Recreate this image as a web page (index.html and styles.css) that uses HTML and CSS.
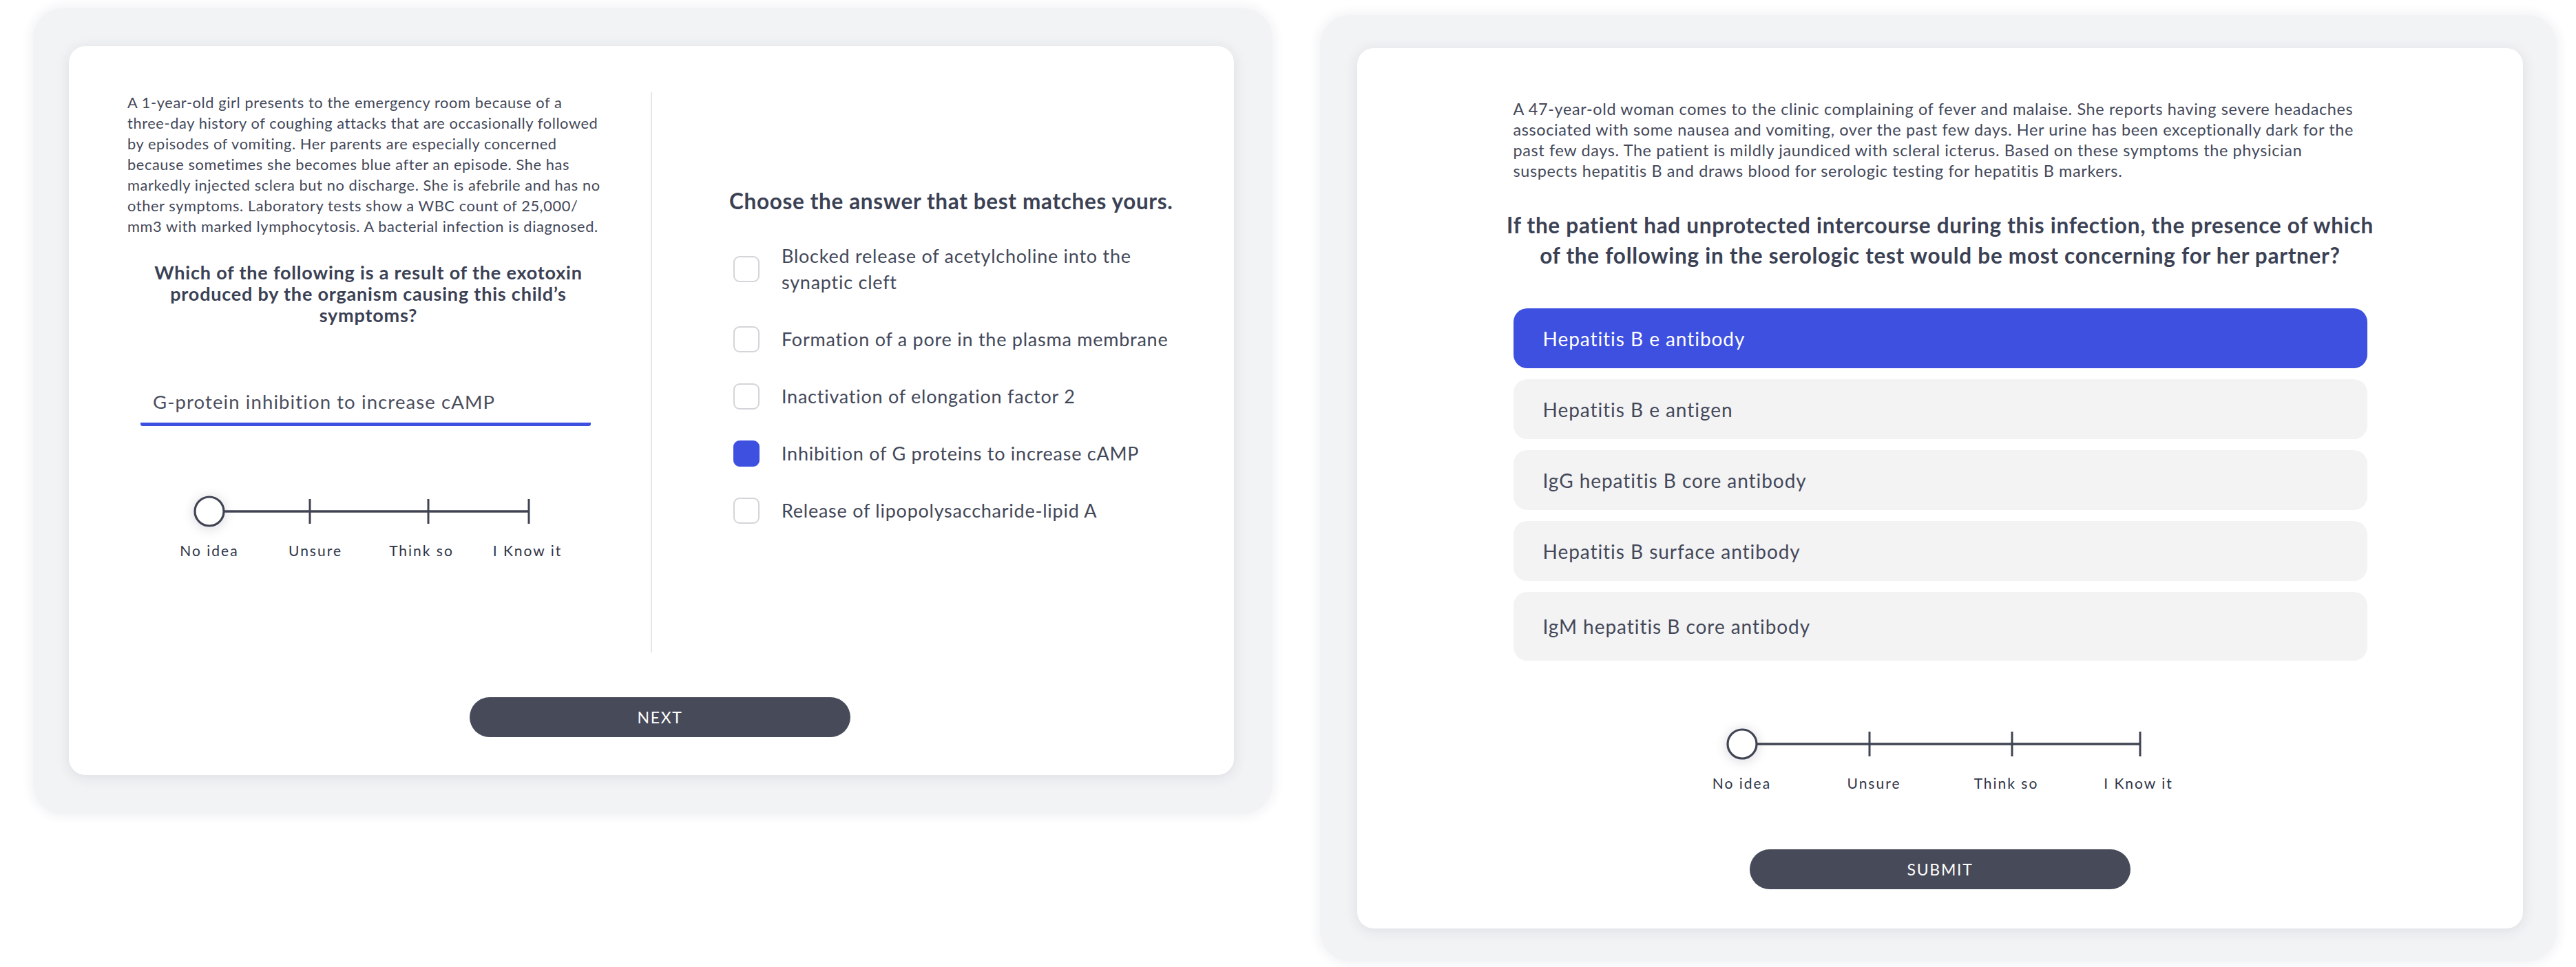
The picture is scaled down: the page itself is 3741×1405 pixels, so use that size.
FILE: index.html
```html
<!DOCTYPE html>
<html lang="en">
<head>
<meta charset="utf-8">
<title>Question cards</title>
<link rel="stylesheet" href="styles.css">
</head>
<body>
<div class="stage">

  <section class="panel panel-left">
    <div class="card card-left">
      <div class="split">
        <div class="col-case">
          <p class="passage">A 1-year-old girl presents to the emergency room because of a three&#8209;day history of coughing attacks that are occasionally followed by episodes of vomiting. Her parents are especially concerned because sometimes she becomes blue after an episode. She has markedly injected sclera but no discharge. She is afebrile and has no other symptoms. Laboratory tests show a WBC count of 25,000/ mm3 with marked lymphocytosis. A bacterial infection is diagnosed.</p>
          <p class="question q-left">Which of the following is a result of the exotoxin produced by the organism causing this child’s symptoms?</p>
          <div class="answer-field">G-protein inhibition to increase cAMP</div>
          <div class="confidence conf-left">
            <svg class="track" width="616" height="46" viewBox="0 0 616 46">
              <defs><filter id="glowL" x="-1" y="-1" width="3" height="3"><feGaussianBlur stdDeviation="7"/></filter></defs>
              <circle cx="77" cy="25" r="26" fill="rgba(30,34,50,0.10)" filter="url(#glowL)"/>
              <line x1="98" y1="23" x2="541" y2="23" stroke="#404452" stroke-width="3.5"/>
              <line x1="223" y1="5" x2="223" y2="41" stroke="#404452" stroke-width="3"/>
              <line x1="395" y1="5" x2="395" y2="41" stroke="#404452" stroke-width="3"/>
              <line x1="541" y1="5" x2="541" y2="41" stroke="#404452" stroke-width="3"/>
              <circle cx="77" cy="23" r="21" fill="#fff" stroke="#404452" stroke-width="3.2"/>
            </svg>
            <div class="conf-labels"><span>No idea</span><span>Unsure</span><span>Think so</span><span>I Know it</span></div>
          </div>
        </div>
        <div class="divider"></div>
        <div class="col-choices">
          <h2 class="choose">Choose the answer that best matches yours.</h2>
          <ul class="checklist">
            <li><span class="box"></span><span class="opt">Blocked release of acetylcholine into the synaptic cleft</span></li>
            <li><span class="box"></span><span class="opt">Formation of a pore in the plasma membrane</span></li>
            <li><span class="box"></span><span class="opt">Inactivation of elongation factor 2</span></li>
            <li><span class="box is-checked"></span><span class="opt">Inhibition of G proteins to increase cAMP</span></li>
            <li><span class="box"></span><span class="opt">Release of lipopolysaccharide-lipid A</span></li>
          </ul>
        </div>
      </div>
      <div class="actions actions-left"><button class="pill">NEXT</button></div>
    </div>
  </section>

  <section class="panel panel-right">
    <div class="card card-right">
      <div class="stack">
        <p class="passage passage-right">A 47-year-old woman comes to the clinic complaining of fever and malaise. She reports having severe headaches associated with some nausea and vomiting, over the past few days. Her urine has been exceptionally dark for the past few days. The patient is mildly jaundiced with scleral icterus. Based on these symptoms the physician suspects hepatitis B and draws blood for serologic testing for hepatitis B markers.</p>
        <p class="question q-right">If the patient had unprotected intercourse during this infection, the presence of which of the following in the serologic test would be most concerning for her partner?</p>
        <ul class="choices">
          <li class="choice is-selected">Hepatitis B e antibody</li>
          <li class="choice">Hepatitis B e antigen</li>
          <li class="choice">IgG hepatitis B core antibody</li>
          <li class="choice">Hepatitis B surface antibody</li>
          <li class="choice choice-tall">IgM hepatitis B core antibody</li>
        </ul>
        <div class="confidence conf-right">
          <svg class="track" width="768" height="46" viewBox="0 0 768 46">
            <defs><filter id="glowR" x="-1" y="-1" width="3" height="3"><feGaussianBlur stdDeviation="7"/></filter></defs>
            <circle cx="96" cy="25" r="26" fill="rgba(30,34,50,0.10)" filter="url(#glowR)"/>
            <line x1="117" y1="23" x2="674" y2="23" stroke="#404452" stroke-width="3.5"/>
            <line x1="281" y1="5" x2="281" y2="41" stroke="#404452" stroke-width="3"/>
            <line x1="488" y1="5" x2="488" y2="41" stroke="#404452" stroke-width="3"/>
            <line x1="674" y1="5" x2="674" y2="41" stroke="#404452" stroke-width="3"/>
            <circle cx="96" cy="23" r="21" fill="#fff" stroke="#404452" stroke-width="3.2"/>
          </svg>
          <div class="conf-labels"><span>No idea</span><span>Unsure</span><span>Think so</span><span>I Know it</span></div>
        </div>
      </div>
      <div class="actions actions-right"><button class="pill">SUBMIT</button></div>
    </div>
  </section>

</div>
</body>
</html>
```

FILE: styles.css
```css
* { box-sizing: border-box; }

html, body {
  margin: 0;
  padding: 0;
  background: #ffffff;
}

body {
  width: 3741px;
  height: 1405px;
  overflow: hidden;
  font-family: Lato, "Open Sans", "Liberation Sans", sans-serif;
  color: #434859;
}

.stage {
  display: flex;
  align-items: flex-start;
}

/* soft grey frames behind the cards */
.panel {
  background: #f2f3f5;
  border-radius: 44px;
  box-shadow: 0 0 14px 6px #f4f5f7;
}

.panel-left {
  width: 1800px;
  margin: 12px 0 0 48px;
  padding: 55px 56px 57px 52px;
}

.panel-right {
  width: 1796px;
  margin: 22px 0 0 69px;
  padding: 48px 49px 48px 54px;
}

.card {
  background: #ffffff;
  border-radius: 24px;
  box-shadow: 0 3px 20px rgba(40, 44, 62, 0.10);
}

.card-left {
  height: 1059px;
  padding: 67px 60px 0 85px;
}

.card-right {
  height: 1279px;
  padding: 73px 0 0 0;
}

/* ---------- left card ---------- */
.split {
  display: flex;
  height: 814px;
}

.col-case {
  width: 700px;
  flex: none;
}

.passage {
  margin: 0;
  font-size: 21.8px;
  letter-spacing: 0.6px;
  line-height: 30px;
  color: #434859;
}

.question {
  margin: 0;
  font-weight: 700;
  text-align: center;
  color: #3b4154;
}

.q-left {
  margin-top: 36px;
  padding: 0 22px;
  font-size: 27px;
  letter-spacing: 0.8px;
  line-height: 31px;
}

.answer-field {
  width: 654px;
  margin: 94px 0 0 19px;
  padding: 0 18px 13px;
  font-size: 27.5px;
  letter-spacing: 1.1px;
  line-height: 34px;
  color: #4a4e5c;
  border-bottom: 5px solid #3d50e0;
  border-radius: 0 0 3px 3px;
}

.confidence {
  margin: 0 auto;
}

.conf-left {
  width: 616px;
  margin-top: 101px;
}

.track {
  display: block;
  overflow: visible;
}

.conf-labels {
  display: flex;
  margin-top: 22px;
}

.conf-labels span {
  flex: 1 1 0;
  text-align: center;
  font-size: 21px;
  line-height: 24px;
  letter-spacing: 2px;
  color: #2f3447;
}

.divider {
  width: 2px;
  flex: none;
  margin-left: 60px;
  background: #e6e6ea;
}

.col-choices {
  flex: 1;
  padding: 138px 0 0 112px;
}

.choose {
  margin: 0;
  font-size: 31.5px;
  letter-spacing: 0.65px;
  line-height: 40px;
  font-weight: 700;
  white-space: nowrap;
  color: #3b4154;
}

.checklist {
  list-style: none;
  margin: 41px 0 0;
  padding: 0 0 0 6px;
  display: flex;
  flex-direction: column;
  gap: 45px;
}

.checklist li {
  display: flex;
  align-items: center;
  gap: 32px;
}

.box {
  flex: none;
  width: 38px;
  height: 38px;
  border: 2px solid #d4d5d9;
  border-radius: 9px;
  background: #fff;
}

.box.is-checked {
  background: #3d50e0;
  border-color: #3d50e0;
}

.opt {
  font-size: 27px;
  letter-spacing: 0.75px;
  line-height: 38px;
  color: #434859;
}

.actions {
  display: flex;
  justify-content: center;
}

.actions-left {
  padding-top: 65px;
}

.pill {
  width: 553px;
  height: 58px;
  border: 0;
  border-radius: 29px;
  background: #474a59;
  color: #ffffff;
  font-family: Lato, "Open Sans", sans-serif;
  font-size: 23px;
  letter-spacing: 1.7px;
  padding: 0;
}

/* ---------- right card ---------- */
.stack {
  width: 1240px;
  margin: 0 auto;
}

.passage-right {
  font-size: 23.4px;
  letter-spacing: 0.65px;
  padding-right: 12px;
}

.q-right {
  margin: 42px -20px 0;
  font-size: 31.5px;
  letter-spacing: 0.72px;
  line-height: 44px;
}

.choices {
  list-style: none;
  margin: 55px 0 0;
  padding: 0;
  display: flex;
  flex-direction: column;
  gap: 16px;
}

.choice {
  height: 87px;
  display: flex;
  align-items: center;
  padding-left: 43px;
  border-radius: 20px;
  background: #f3f3f4;
  font-size: 28px;
  letter-spacing: 0.95px;
  color: #434859;
}

.choice.is-selected {
  background: #3d50e0;
  color: #ffffff;
}

.choice.choice-tall {
  height: 100px;
}

.conf-right {
  width: 768px;
  margin-top: 98px;
}

.actions-right {
  padding-top: 84px;
}
```
